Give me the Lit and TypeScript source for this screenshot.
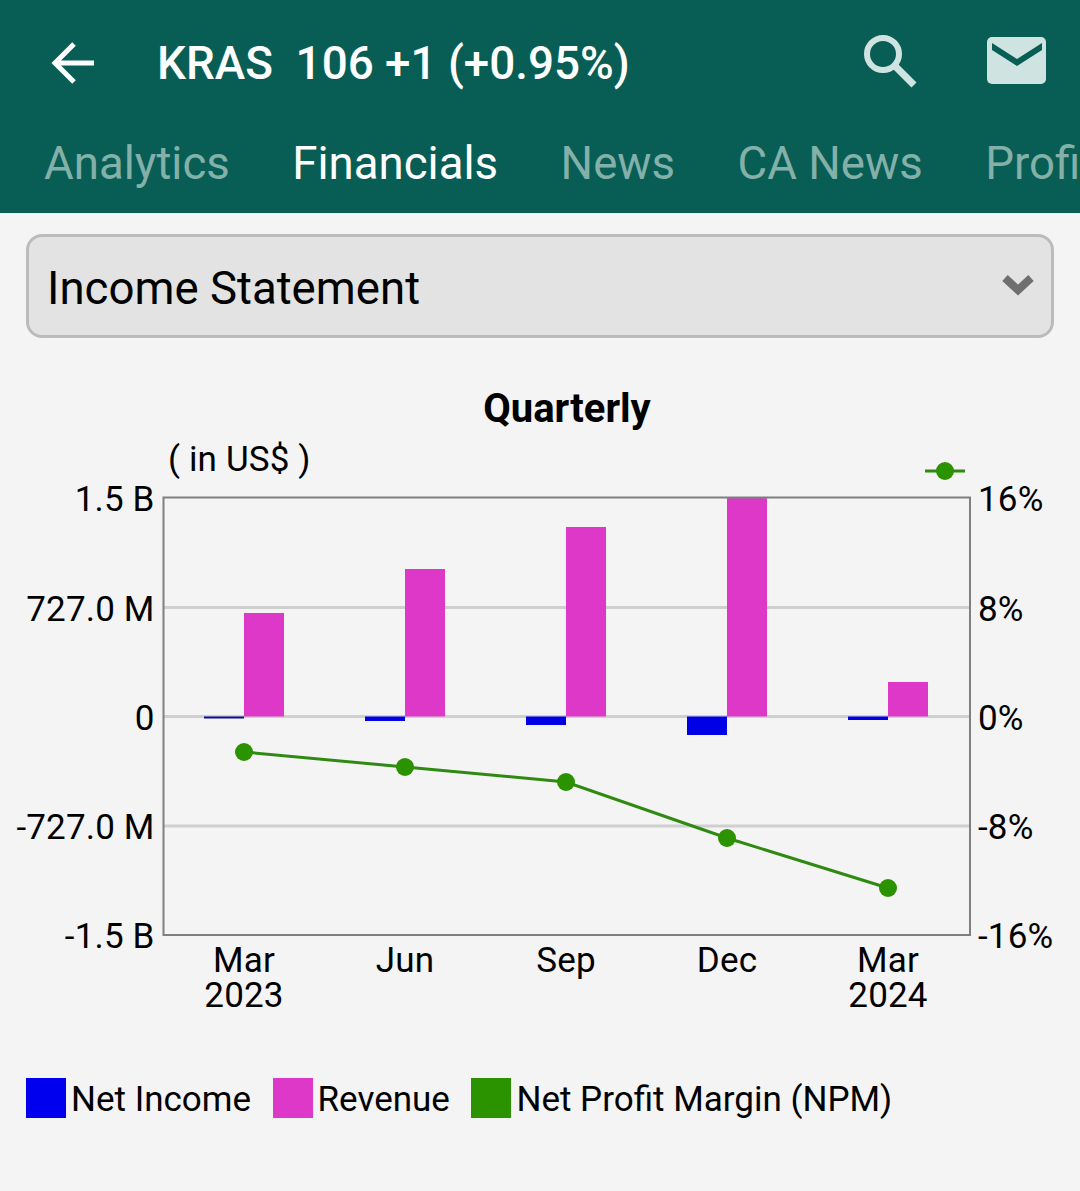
import { LitElement, html, css, svg } from 'lit';
import { customElement } from 'lit/decorators.js';

const PLOT = { left: 163.5, right: 970, top: 497.5, bottom: 935 };
const ZERO = 716.5;

const quarters = [
  { x: 244, label: ['Mar', '2023'], revenue: 103.5, income: 2, npm: 752 },
  { x: 405, label: ['Jun'], revenue: 147.5, income: 4.5, npm: 767 },
  { x: 566, label: ['Sep'], revenue: 189.5, income: 8.5, npm: 782 },
  { x: 727, label: ['Dec'], revenue: 219, income: 18.5, npm: 838 },
  { x: 888, label: ['Mar', '2024'], revenue: 34.5, income: 3.5, npm: 888 },
];

const leftTicks = [
  { y: 498, text: '1.5 B' },
  { y: 608, text: '727.0 M' },
  { y: 717, text: '0' },
  { y: 826, text: '-727.0 M' },
  { y: 935, text: '-1.5 B' },
];

const rightTicks = [
  { y: 498, text: '16%' },
  { y: 608, text: '8%' },
  { y: 717, text: '0%' },
  { y: 826, text: '-8%' },
  { y: 935, text: '-16%' },
];

@customElement('app-root')
export class AppRoot extends LitElement {
  static styles = css`
    :host {
      display: block;
      width: 1080px;
      height: 1191px;
      background: #f4f4f4;
      font-family: Roboto, sans-serif;
      color: #000;
      overflow: hidden;
    }

    .header {
      background: #085e55;
      height: 213px;
      overflow: hidden;
    }

    .toolbar {
      display: flex;
      align-items: center;
      height: 126px;
      padding-left: 50px;
    }

    .back {
      width: 48px;
      height: 48px;
      margin-right: 59px;
      flex: none;
    }

    .title {
      flex: 1;
      color: #fff;
      font-size: 45.8px;
      font-weight: 500;
      white-space: pre;
    }

    .search {
      width: 56px;
      height: 56px;
      margin: -4px 68px 0 0;
    }

    .mail {
      width: 62px;
      height: 50px;
      margin: -4px 32px 0 0;
    }

    .tabs {
      display: flex;
      gap: 62.5px;
      padding-left: 44px;
      height: 87px;
      white-space: nowrap;
      font-size: 45.6px;
      line-height: 75px;
      color: #83b0a9;
    }

    .tabs .active {
      color: #fff;
    }

    .select {
      display: flex;
      align-items: center;
      justify-content: space-between;
      box-sizing: border-box;
      height: 104px;
      margin: 21px 26px 0;
      padding: 4px 17px 0 18px;
      background: #e3e3e3;
      border: 3px solid #bbb;
      border-radius: 16px;
      font-size: 45.6px;
    }

    .select svg {
      width: 32px;
      height: 24px;
      margin-top: -6px;
    }

    .chart {
      display: block;
      width: 1080px;
      height: 690px;
    }

    .chart text {
      font-family: Roboto, sans-serif;
      font-size: 35px;
      letter-spacing: 0.15px;
      fill: #000;
    }

    .chart .heading {
      font-size: 40px;
      font-weight: 700;
      letter-spacing: 0;
    }

    .legend {
      display: flex;
      align-items: center;
      padding-left: 26px;
      font-size: 35px;
      margin-top: 48px;
    }

    .swatch {
      width: 40px;
      height: 40px;
      margin-right: 5px;
      flex: none;
    }

    .legend span {
      margin-right: 21.5px;
      padding-top: 3px;
    }
  `;

  renderChart() {
    return svg`
      <g transform="translate(0,-338)">
        <text class="heading" x="567" y="422" text-anchor="middle">Quarterly</text>
        <text x="168" y="471">( in US$ )</text>
        <line x1="925" x2="965" y1="471" y2="471" stroke="#2f8a12" stroke-width="3"/>
        <circle cx="945" cy="471" r="9" fill="#2b9200"/>

        ${[607.5, 716.5, 826].map(
          (y) => svg`<line x1=${PLOT.left} x2=${PLOT.right} y1=${y} y2=${y} stroke="#cfcfcf" stroke-width="3"/>`
        )}

        ${quarters.map(
          (q) => svg`
            <rect x=${q.x} y=${ZERO - q.revenue} width="40" height=${q.revenue} fill="#dd38c8"/>
            <rect x=${q.x - 40} y=${ZERO} width="40" height=${q.income} fill=${q.income < 3 ? '#0a0a9c' : '#0000e6'}/>
          `
        )}

        <rect x=${PLOT.left} y=${PLOT.top} width=${PLOT.right - PLOT.left} height=${PLOT.bottom - PLOT.top}
          fill="none" stroke="#7f7f7f" stroke-width="2"/>

        <polyline points=${quarters.map((q) => `${q.x},${q.npm}`).join(' ')}
          fill="none" stroke="#2f8a12" stroke-width="3"/>
        ${quarters.map((q) => svg`<circle cx=${q.x} cy=${q.npm} r="9" fill="#2b9200"/>`)}

        ${leftTicks.map(
          (t) => svg`<text x="154.5" y=${t.y + 13} text-anchor="end">${t.text}</text>`
        )}
        ${rightTicks.map((t) => svg`<text x="978" y=${t.y + 13}>${t.text}</text>`)}

        ${quarters.map((q) =>
          q.label.map(
            (line, i) => svg`<text x=${q.x} y=${972 + i * 35} text-anchor="middle">${line}</text>`
          )
        )}
      </g>
    `;
  }

  render() {
    return html`
      <div class="header">
        <div class="toolbar">
          <svg class="back" viewBox="0 0 48 48" fill="none" stroke="#fff" stroke-width="5">
            <path d="M44 24H6M24 5 5 24l19 19"/>
          </svg>
          <div class="title">KRAS  106 +1 (+0.95%)</div>
          <svg class="search" viewBox="0 0 56 56" fill="none" stroke="#cfe4e0" stroke-width="6">
            <circle cx="21" cy="21" r="16"/>
            <path d="M32 32 52 52" stroke-width="7"/>
          </svg>
          <svg class="mail" viewBox="0 0 62 50">
            <rect x="1" y="1" width="59" height="47" rx="5" fill="#cfe4e0"/>
            <path d="M6 7 31 23 56 7v7L31 30 6 14z" fill="#085e55"/>
          </svg>
        </div>
        <div class="tabs">
          <span>Analytics</span>
          <span class="active">Financials</span>
          <span>News</span>
          <span>CA News</span>
          <span>Profile</span>
        </div>
      </div>

      <div class="select">
        <span>Income Statement</span>
        <svg viewBox="0 0 32 24" fill="none" stroke="#6f6f6f" stroke-width="8">
          <path d="M3 5 16 17 29 5"/>
        </svg>
      </div>

      <svg class="chart" viewBox="0 0 1080 690">${this.renderChart()}</svg>

      <div class="legend">
        <div class="swatch" style="background:#0000ee"></div>
        <span>Net Income</span>
        <div class="swatch" style="background:#dd38c8"></div>
        <span>Revenue</span>
        <div class="swatch" style="background:#2b9200"></div>
        <span>Net Profit Margin (NPM)</span>
      </div>
    `;
  }
}
